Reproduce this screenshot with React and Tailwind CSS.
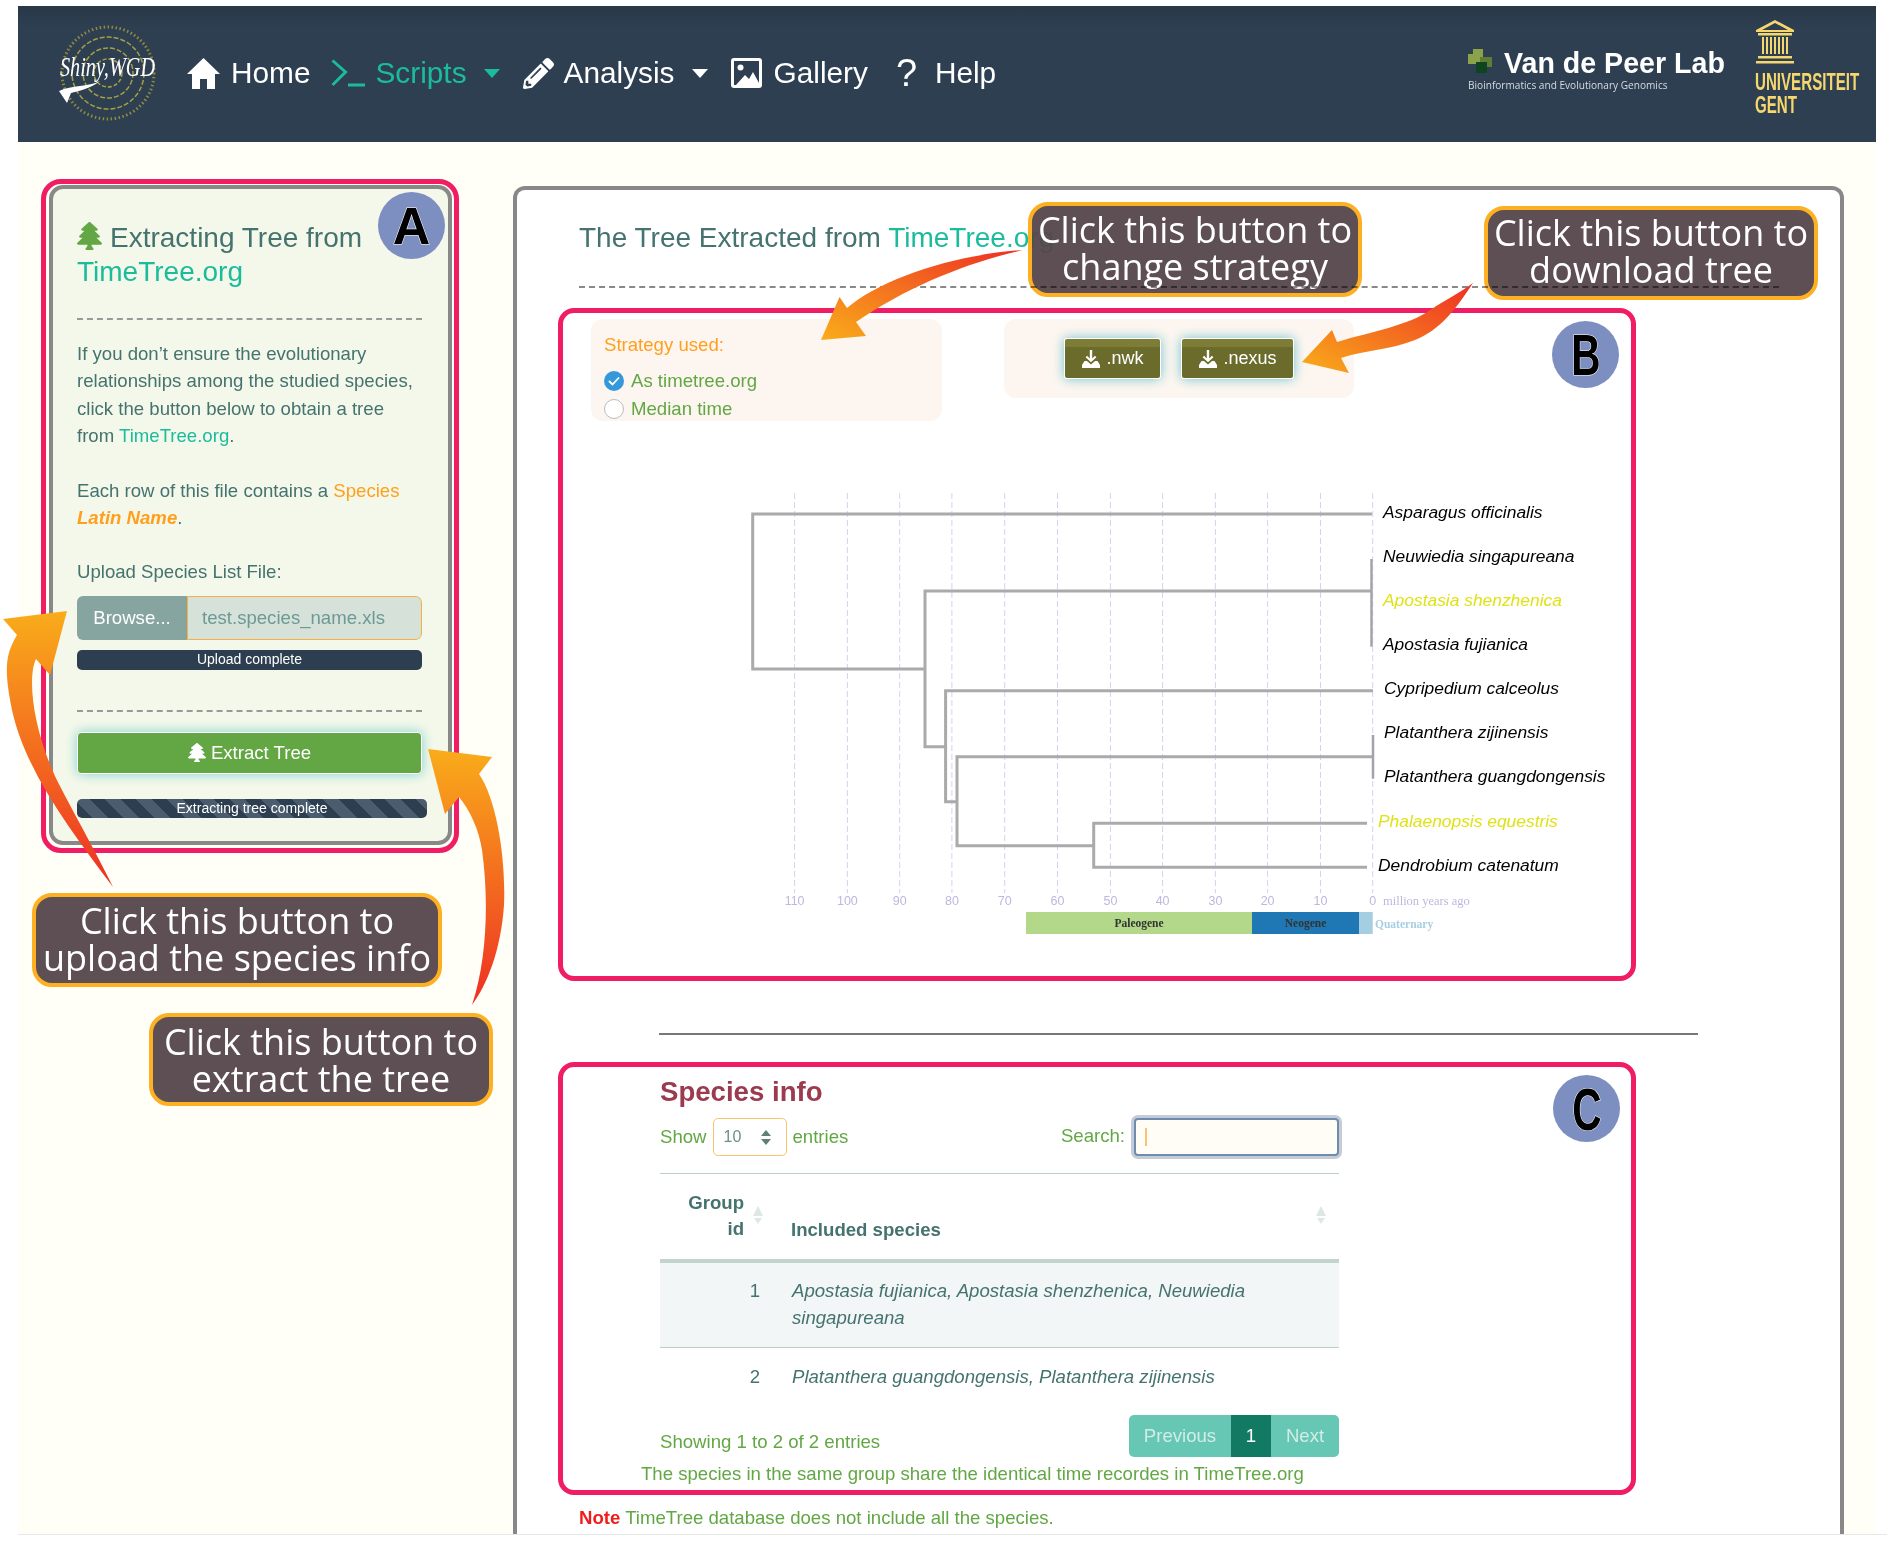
import { FaPencilAlt, FaTree } from "react-icons/fa";

/* page coordinates are used in the tree chart's viewBox, so the numbers read off the screenshot go in as is */
const gridX = [794.6, 847.4, 899.7, 951.9, 1004.7, 1057.5, 1110.4, 1162.6, 1215.4, 1267.6, 1320.5, 1372.7];
const ages = [110, 100, 90, 80, 70, 60, 50, 40, 30, 20, 10, 0];

const branches = [
  "M1372 514 H752.7 V669 H925",
  "M1371.5 591 H925 V746.7 H945.6",
  "M1373 690.7 H945.6 V801.7 H957",
  "M1373 756.7 H957 V845.7 H1093.7",
  "M1367 823.3 H1093.7 V867.3 H1367",
];

const species = [
  { name: "Asparagus officinalis", x: 1383, y: 512.7 },
  { name: "Neuwiedia singapureana", x: 1383, y: 556.7 },
  { name: "Apostasia shenzhenica", x: 1383, y: 600.7, hit: true },
  { name: "Apostasia fujianica", x: 1383, y: 644.7 },
  { name: "Cypripedium calceolus", x: 1384, y: 689 },
  { name: "Platanthera zijinensis", x: 1384, y: 733 },
  { name: "Platanthera guangdongensis", x: 1384, y: 777 },
  { name: "Phalaenopsis equestris", x: 1378, y: 821.7, hit: true },
  { name: "Dendrobium catenatum", x: 1378, y: 865.7 },
];

function ShinyLogo() {
  return (
    <svg width="100" height="100" viewBox="0 0 100 100" className="shrink-0 overflow-visible">
      <circle cx="50" cy="50" r="46" fill="none" stroke="#8f8b3e" strokeWidth="3" strokeDasharray="1.5 2.5" />
      <circle cx="50" cy="50" r="36" fill="none" stroke="#a5a044" strokeWidth="1.5" strokeDasharray="5 2" />
      <circle cx="50" cy="50" r="25" fill="none" stroke="#a5a044" strokeWidth="1.5" strokeDasharray="5 2" />
      <circle cx="50" cy="50" r="14" fill="none" stroke="#a5a044" strokeWidth="1.5" strokeDasharray="4 2" />
      <text x="2" y="53" fill="#fff" fontFamily="'Liberation Serif', serif" fontStyle="italic" fontSize="27" textLength="95" lengthAdjust="spacingAndGlyphs">
        Shiny,WGD
      </text>
      <path d="M1 68 C14 62 30 64 42 58 C32 66 20 68 13 70 L9 80 Z" fill="#fff" />
    </svg>
  );
}

function Caret({ className }) {
  return <span className={`h-0 w-0 border-x-[8px] border-t-[9px] border-x-transparent ${className}`} />;
}

function SaveIcon() {
  return (
    <svg width="20" height="20" viewBox="0 0 20 20" fill="#fff" className="shrink-0">
      <path d="M8.8 1h2.4v8.4l2.7-2.6 1.5 1.5L10 13.2 4.6 8.3l1.5-1.5 2.7 2.6z" />
      <path d="M3.5 12h2.4L10 15.6 14.1 12h2.4L19 16v3H1v-3z" />
    </svg>
  );
}

function Callout({ className, first, second }) {
  return (
    <div className={`absolute z-10 flex flex-col items-center justify-center rounded-[20px] border-4 border-[#fdb022] bg-[#54464a]/95 font-['Open_Sans',sans-serif] text-[36px] leading-[37px] whitespace-nowrap text-white ${className}`}>
      <span>{first}</span>
      <span>{second}</span>
    </div>
  );
}

function Badge({ className, letterClass, letter }) {
  return (
    <div className={`absolute z-30 flex h-[67px] w-[67px] items-center justify-center rounded-full bg-[#7d8fc0] font-['Liberation_Sans',sans-serif] text-[52px] font-bold text-black [-webkit-text-stroke:1px_#fff] [paint-order:stroke_fill] ${className}`}>
      <span className={letterClass}>{letter}</span>
    </div>
  );
}

function SortArrows({ className }) {
  return (
    <svg width="10" height="18" viewBox="0 0 10 18" fill="#dde8e5" className={`absolute ${className}`}>
      <path d="M5 0 L10 10 H0 Z" />
      <path d="M1 12 H9 L5 18 Z" />
    </svg>
  );
}

function TreeChart() {
  return (
    <svg width="900" height="450" viewBox="720 490 900 450" className="mt-[69px] ml-[157px] block">
      {gridX.map((x) => (
        <line key={x} x1={x} x2={x} y1="493" y2="893" stroke="#d5d2ef" strokeWidth="1" strokeDasharray="6 3" />
      ))}
      {branches.map((d) => (
        <path key={d} d={d} fill="none" stroke="#aaaaaa" strokeWidth="3" />
      ))}
      <line x1="1371.5" x2="1371.5" y1="559" y2="646.7" stroke="#a3a3ad" strokeWidth="2.5" />
      <line x1="1373" x2="1373" y1="735" y2="778.7" stroke="#a3a3ad" strokeWidth="2.5" />
      {species.map((s) => (
        <text key={s.name} x={s.x} y={s.y + 5} fontFamily="'Liberation Sans', sans-serif" fontStyle="italic" fontSize="17.4" fill={s.hit ? "#dfe316" : "#000"}>
          {s.name}
        </text>
      ))}
      {ages.map((age, i) => (
        <text key={age} x={gridX[i]} y="905" textAnchor="middle" fontFamily="'Liberation Sans', sans-serif" fontSize="12.5" fill="#bcb8de">
          {age}
        </text>
      ))}
      <text x="1383" y="905" fontFamily="'Liberation Serif', serif" fontSize="12.5" fill="#bcb8de">million years ago</text>
      <rect x="1026" y="912" width="226" height="22" fill="#b4d88a" />
      <rect x="1252" y="912" width="107" height="22" fill="#1f78b4" />
      <rect x="1359" y="912" width="13.7" height="22" fill="#a6cee3" />
      <text x="1139" y="927" textAnchor="middle" fontFamily="'Liberation Serif', serif" fontWeight="700" fontSize="11.5" fill="#333">Paleogene</text>
      <text x="1305.5" y="927" textAnchor="middle" fontFamily="'Liberation Serif', serif" fontWeight="700" fontSize="11.5" fill="#333">Neogene</text>
      <text x="1375" y="928" fontFamily="'Liberation Serif', serif" fontWeight="700" fontSize="11.5" fill="#a6cee3">Quaternary</text>
    </svg>
  );
}

function Arrows() {
  return (
    <svg width="1887" height="1559" viewBox="0 0 1887 1559" className="pointer-events-none absolute top-0 left-0 z-20">
      <defs>
        <linearGradient id="up1" x1="0" y1="0" x2="0" y2="1">
          <stop offset="0" stopColor="#f9ac1a" />
          <stop offset="1" stopColor="#ee2f24" />
        </linearGradient>
        <linearGradient id="left1" x1="0" y1="1" x2="1" y2="0">
          <stop offset="0" stopColor="#f9ac1a" />
          <stop offset="1" stopColor="#ee2f24" />
        </linearGradient>
      </defs>
      <path fill="url(#up1)" d="M3 619 L67 611 L50 675 L36 659 C26 680 35 740 62 790 C75 815 100 860 113 887 C70 830 25 770 12 710 C4 670 5 655 17 635 Z" />
      <path fill="url(#up1)" d="M428 749 L492 757 L479 774 C497 800 506 860 504 905 C501 950 487 985 472 1005 C487 960 489 900 482 850 C479 830 470 810 459 797 L445 814 Z" />
      <path fill="url(#left1)" d="M821 340 L839.5 297 L847 308 C880 280 950 255 1023 250 C970 262 910 285 856 322 L866 336 Z" />
      <path fill="url(#left1)" d="M1302 362 L1332 330 L1337 342 C1370 332 1410 325 1430 310 C1445 300 1460 293 1473 283 C1455 310 1440 330 1415 340 C1390 350 1365 350 1341 358 L1349 373 Z" />
    </svg>
  );
}

export default function App() {
  return (
    <div className="relative h-[1559px] w-[1887px] overflow-hidden bg-white pt-[6px] pl-[18px] font-['Liberation_Sans',sans-serif]">
      {/* navbar */}
      <header className="flex h-[136px] w-[1858px] bg-[linear-gradient(#283847,#2e3f52_22px)] pt-[16px] pl-[40px] text-white">
        <div className="flex h-[102px] items-center text-[29.8px]">
          <ShinyLogo />
          <svg width="33" height="33" viewBox="0 0 33 33" fill="#fff" className="ml-[29px] shrink-0">
            <path d="M16.5 1 L33 17 H28 V32 H20 V22 H13 V32 H5 V17 H0 Z" />
          </svg>
          <span className="ml-[11px]">Home</span>
          <svg width="34" height="28" viewBox="0 0 34 28" fill="none" className="ml-[21px] shrink-0">
            <path d="M1.5 1.5 L14.5 13 L1.5 26" stroke="#1abc9c" strokeWidth="3" />
            <rect x="17" y="24.5" width="17" height="3" fill="#1abc9c" />
          </svg>
          <span className="ml-[10px] text-[#1abc9c]">Scripts</span>
          <Caret className="ml-[17px] border-t-[#1abc9c]" />
          <FaPencilAlt className="ml-[23px] h-[31px] w-[31px] shrink-0" />
          <span className="ml-[10px]">Analysis</span>
          <Caret className="ml-[17px] border-t-white" />
          <svg width="31" height="30" viewBox="0 0 31 30" className="ml-[23px] shrink-0">
            <rect x="0" y="0" width="31" height="30" rx="3" fill="#fff" />
            <rect x="3" y="3" width="25" height="24" fill="#2e3f52" />
            <circle cx="9.5" cy="9.5" r="3" fill="#fff" />
            <path d="M5 27 L14 17 L18 21 L22 14 L28 25 V27 Z" fill="#fff" />
          </svg>
          <span className="ml-[12px]">Gallery</span>
          <span className="ml-[28px] w-[21px] text-[38px] leading-[38px]">?</span>
          <span className="ml-[18px]">Help</span>
        </div>
        <div className="ml-auto flex pr-[16px]">
          <div className="w-[258px] pt-[23px]">
            <div className="flex items-center">
              <svg width="24" height="24" viewBox="0 0 24 24" className="-mt-[4px] shrink-0">
                <rect x="0" y="5" width="12" height="10" fill="#8aa34a" />
                <rect x="5" y="0" width="10" height="10" fill="#8aa34a" />
                <rect x="12" y="8" width="12" height="10" fill="#5f7d36" />
                <rect x="8" y="13" width="11" height="11" fill="#0f4420" />
              </svg>
              <span className="ml-[12px] text-[28.6px] leading-[36px] font-bold whitespace-nowrap">Van de Peer Lab</span>
            </div>
            <div className="-mt-[3px] font-['Open_Sans',sans-serif] text-[10.1px] leading-[14px] whitespace-nowrap text-[#d5dbe0]">
              Bioinformatics and Evolutionary Genomics
            </div>
          </div>
          <div className="ml-[29px] w-[105px] text-[#f5d76e]">
            <svg width="40" height="44" viewBox="0 0 40 44" fill="#f5d76e" className="-mt-[2px] block">
              <path d="M20 0 L39 10 V12 H1 V10 Z M20 3 L7 10 H33 Z" fillRule="evenodd" />
              <rect x="3" y="13" width="34" height="2.5" />
              <rect x="7" y="17" width="2" height="17" />
              <rect x="11" y="17" width="2" height="17" />
              <rect x="15" y="17" width="2" height="17" />
              <rect x="19" y="17" width="2" height="17" />
              <rect x="23" y="17" width="2" height="17" />
              <rect x="27" y="17" width="2" height="17" />
              <rect x="31" y="17" width="2" height="17" />
              <rect x="3" y="36" width="34" height="2.5" />
              <rect x="1" y="41" width="38" height="2.5" />
            </svg>
            <div className="mt-[6px] origin-left scale-x-[0.63] text-[24px] leading-[24px] font-bold whitespace-nowrap">UNIVERSITEIT</div>
            <div className="-mt-[1px] origin-left scale-x-[0.63] text-[24px] leading-[24px] font-bold whitespace-nowrap">GENT</div>
          </div>
        </div>
      </header>

      {/* page body */}
      <div className="flex h-[1392px] w-[1858px] bg-[#fffff8] pt-[37px] pl-[23px]">
        {/* A: sidebar */}
        <div className="h-[674px] w-[418px] shrink-0 rounded-[20px] border-[5px] border-[#f01d64] pt-[1px] pr-[2px] pl-[3px]">
          <div className="h-[660px] rounded-[14px] border-4 border-[#888888] bg-[#f4f8ea] pt-[32px] pr-[26px] pl-[24px] text-[18.6px] leading-[27.4px] text-[#45736f]">
            <h2 className="text-[28px] leading-[34px]">
              <FaTree preserveAspectRatio="none" className="mr-[8px] inline-block h-[28px] w-[25px] align-[-3px] text-[#62a744]" />
              Extracting Tree from <span className="text-[#1abc9c]">TimeTree.org</span>
            </h2>
            <div className="mt-[29px] border-t-2 border-dashed border-[#999999]" />
            <p className="mt-[20px]">
              If you don’t ensure the evolutionary relationships among the studied species, click the button below to obtain a tree from <span className="text-[#1abc9c]">TimeTree.org</span>.
            </p>
            <p className="mt-[27px]">
              Each row of this file contains a <span className="text-[#ff9f1c]">Species</span> <b className="text-[#ff9f1c] italic">Latin Name</b>.
            </p>
            <p className="mt-[27px]">Upload Species List File:</p>
            <div className="mt-[10px] flex h-[44px] overflow-hidden rounded-[6px]">
              <div className="flex w-[110px] items-center justify-center bg-[#86a5a0] text-white">Browse...</div>
              <div className="flex flex-1 items-center rounded-r-[6px] border border-[#f5b041] bg-[#d6e1da] pl-[14px] text-[#6d9a94]">test.species_name.xls</div>
            </div>
            <div className="mt-[10px] flex h-[20px] items-center justify-center rounded-[5px] bg-[#2c3e50] text-[14px] text-white">Upload complete</div>
            <div className="mt-[40px] border-t-2 border-dashed border-[#999999]" />
            <div className="mt-[20px] flex h-[42px] items-center justify-center gap-[5px] rounded-[4px] border border-white bg-[#62a744] text-white shadow-[0_0_12px_#7fcfd0]">
              <FaTree preserveAspectRatio="none" className="h-[19px] w-[18px]" />
              Extract Tree
            </div>
            <div className="mt-[25px] flex h-[19px] w-[350px] items-center justify-center rounded-[5px] bg-[repeating-linear-gradient(45deg,#2c3e50,#2c3e50_11px,#4a5c6e_11px,#4a5c6e_22px)] text-[14px] text-white">
              Extracting tree complete
            </div>
          </div>
        </div>

        {/* main panel */}
        <main className="mt-[7px] ml-[54px] h-[1348px] w-[1331px] shrink-0 rounded-t-[12px] border-x-4 border-t-4 border-[#888888] bg-white pt-[31px]">
          <h2 className="ml-[62px] text-[28px] leading-[34px] text-[#45736f]">
            The Tree Extracted from <span className="text-[#1abc9c]">TimeTree.org</span>
          </h2>
          <div className="relative z-20 mt-[31px] ml-[62px] w-[1200px] border-t-2 border-dashed border-[#888888] mix-blend-multiply" />

          {/* B: tree */}
          <section className="mt-[20px] ml-[41px] h-[673px] w-[1078px] rounded-[16px] border-[5px] border-[#f01d64] pt-[6px] text-[18.6px]">
            <div className="flex items-start pl-[28px]">
              <div className="h-[102px] w-[351px] rounded-[12px] bg-[#fdf6f0] pt-[13px] pl-[13px]">
                <div className="leading-[26px] text-[#ff9f1c]">Strategy used:</div>
                <div className="mt-[9px] flex h-[28px] items-center gap-[7px] text-[#62a744]">
                  <span className="flex h-[20px] w-[20px] items-center justify-center rounded-full bg-[#3498db]">
                    <svg width="12" height="10" viewBox="0 0 12 10" fill="none" stroke="#fff" strokeWidth="1.8">
                      <path d="M1 5 L4.5 8.5 L11 1.5" />
                    </svg>
                  </span>
                  As timetree.org
                </div>
                <div className="flex h-[27px] items-center gap-[7px] text-[#62a744]">
                  <span className="h-[20px] w-[20px] rounded-full border border-[#bbbbbb] bg-white" />
                  Median time
                </div>
              </div>
              <div className="ml-[62px] flex h-[79px] w-[350px] gap-[20px] rounded-[12px] bg-[#fdf6f0] pt-[19px] pl-[60px] text-[18px] text-white">
                <div className="flex h-[41px] w-[97px] items-center justify-center gap-[5px] rounded-[3px] border border-white bg-[linear-gradient(#7d7d38_8px,#6b6b2c_8px)] shadow-[0_0_12px_#6fc3cf]">
                  <SaveIcon />
                  .nwk
                </div>
                <div className="flex h-[41px] w-[113px] items-center justify-center gap-[5px] rounded-[3px] border border-white bg-[linear-gradient(#7d7d38_8px,#6b6b2c_8px)] shadow-[0_0_12px_#6fc3cf]">
                  <SaveIcon />
                  .nexus
                </div>
              </div>
            </div>
            <TreeChart />
          </section>

          <hr className="mt-[52px] ml-[142px] h-[2px] w-[1039px] border-0 bg-[#777777]" />

          {/* C: species table */}
          <section className="mt-[27px] ml-[41px] h-[433px] w-[1078px] rounded-[16px] border-[5px] border-[#f01d64] pt-[8px] pl-[97px] text-[18.6px] text-[#62a744]">
            <h3 className="text-[27.6px] leading-[34px] font-bold text-[#9c3a4f]">Species info</h3>
            <div className="mt-[9px] flex h-[38px] w-[679px] items-center">
              <span>Show</span>
              <span className="ml-[6px] flex h-[38px] w-[74px] items-center justify-between rounded-[5px] border border-[#f8c471] pr-[15px] pl-[10px] text-[16px] text-[#6d8f8a]">
                10
                <svg width="10" height="15" viewBox="0 0 10 15" fill="#5f7f7b">
                  <path d="M5 0 L10 6 H0 Z M5 15 L0 9 H10 Z" />
                </svg>
              </span>
              <span className="ml-[6px]">entries</span>
              <span className="-mt-[2px] ml-auto">Search:</span>
              <span className="ml-[9px] flex h-[38px] w-[205px] items-center rounded-[4px] border-2 border-[#6f8bb0] bg-[#fffdf5] pl-[9px] shadow-[0_0_0_3px_#c5ccd6]">
                <span className="h-[18px] w-[2px] bg-[#f8c471]" />
              </span>
            </div>
            <div className="mt-[17px] w-[679px] border-t border-[#b9cfc9] text-[#45736f]">
              <div className="flex h-[89px] border-b-4 border-[#c3d3cd] font-bold">
                <div className="relative w-[84px] pt-[16px] text-right leading-[26px]">
                  Group<br />id
                  <SortArrows className="top-[32px] -right-[19px]" />
                </div>
                <div className="relative ml-[47px] flex-1 pt-[42px] leading-[27px]">
                  Included species
                  <SortArrows className="top-[32px] right-[13px]" />
                </div>
              </div>
              <div className="flex h-[85px] items-center border-b border-[#b9cfc9] bg-[#f3f6f7] pb-[2px] leading-[27px]">
                <div className="-mt-[27px] w-[100px] text-right">1</div>
                <div className="ml-[32px] w-[500px] italic">Apostasia fujianica, Apostasia shenzhenica, Neuwiedia singapureana</div>
              </div>
              <div className="flex h-[58px] items-center pb-[2px] leading-[27px]">
                <div className="w-[100px] text-right">2</div>
                <div className="ml-[32px] italic">Platanthera guangdongensis, Platanthera zijinensis</div>
              </div>
            </div>
            <div className="mt-[9px] flex w-[679px] items-start justify-between">
              <span className="mt-[13px]">Showing 1 to 2 of 2 entries</span>
              <div className="flex h-[42px] overflow-hidden rounded-[5px] bg-[#66c7b4] text-[#d3ece6]">
                <span className="flex w-[102px] items-center justify-center">Previous</span>
                <span className="flex w-[40px] items-center justify-center bg-[#127a63] text-white">1</span>
                <span className="flex w-[68px] items-center justify-center">Next</span>
              </div>
            </div>
            <p className="mt-[3px] -ml-[19px] leading-[27px] whitespace-nowrap">The species in the same group share the identical time recordes in TimeTree.org</p>
          </section>

          <p className="mt-[9px] ml-[62px] text-[18.6px] leading-[27px] text-[#62a744]">
            <b className="text-[#f01d1d]">Note</b> TimeTree database does not include all the species.
          </p>
        </main>
      </div>
      <div className="h-px w-full bg-[#e8e8e8]" />

      {/* annotations on top of the page */}
      <Callout className="top-[893px] left-[32px] h-[94px] w-[410px] pb-[2px]" first="Click this button to" second="upload the species info" />
      <Callout className="top-[1013px] left-[149px] h-[93px] w-[344px]" first="Click this button to" second="extract the tree" />
      <Callout className="top-[202px] left-[1028px] h-[95px] w-[334px] pb-[4px]" first="Click this button to" second="change strategy" />
      <Callout className="top-[206px] left-[1484px] h-[94px] w-[334px] pb-[4px]" first="Click this button to" second="download tree" />
      <Arrows />
      <Badge className="top-[192px] left-[378px]" letterClass="" letter="A" />
      <Badge className="top-[321px] left-[1552px]" letterClass="scale-x-[0.78] scale-y-[1.1]" letter="B" />
      <Badge className="top-[1075px] left-[1553px]" letterClass="scale-x-[0.78] scale-y-[1.15]" letter="C" />
    </div>
  );
}
